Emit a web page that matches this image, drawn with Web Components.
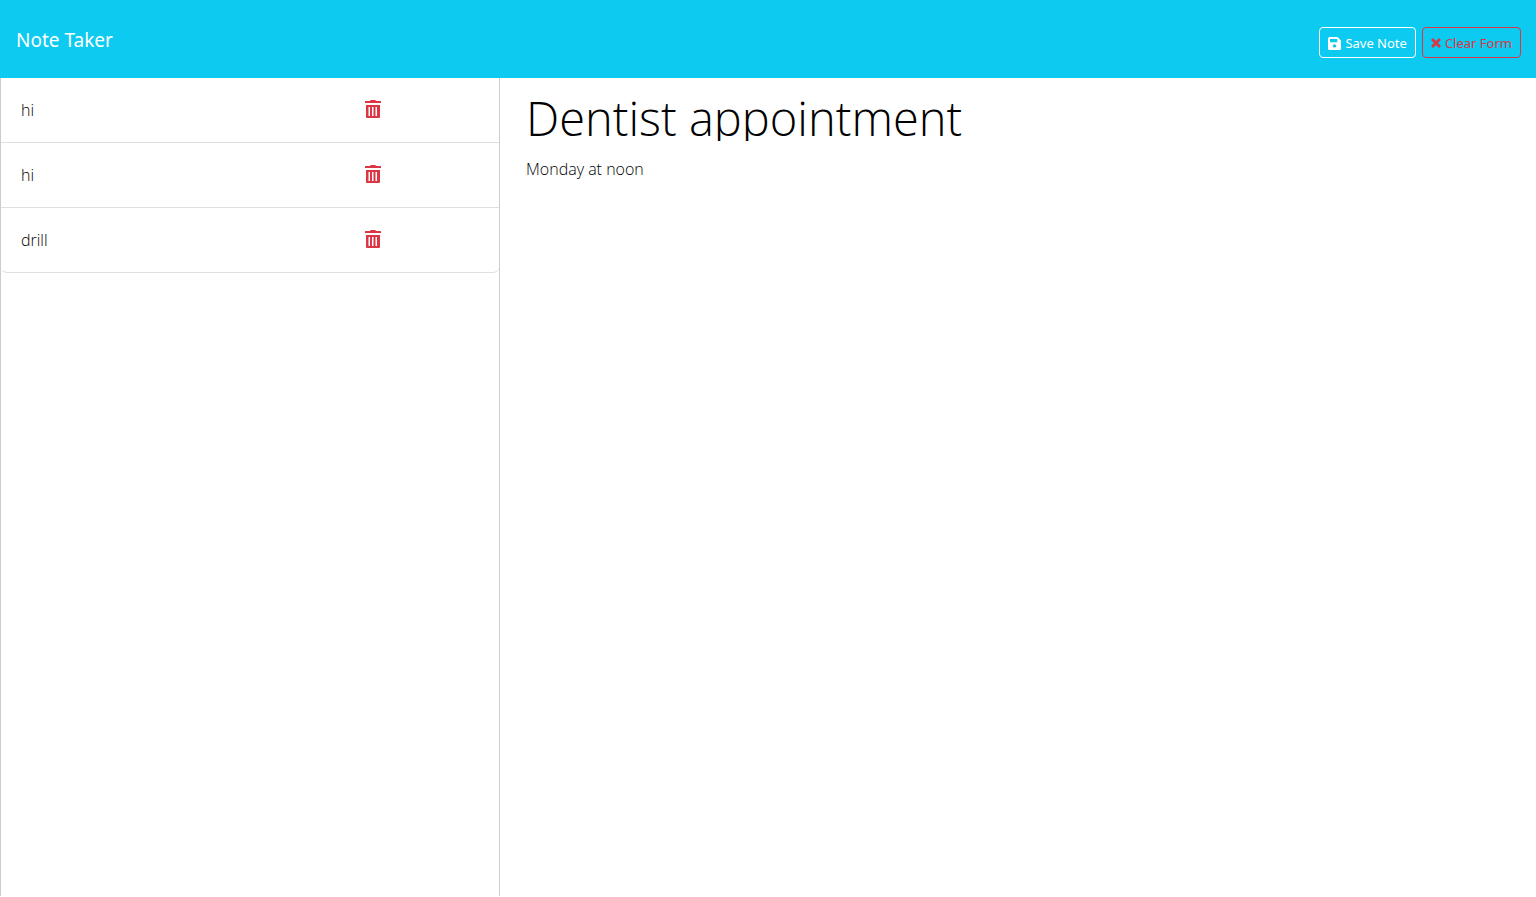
<!DOCTYPE html>
<html lang="en">
<head>
<meta charset="utf-8">
<title>Note Taker</title>
<style>
  html, body { margin: 0; }
  body {
    font-family: "Open Sans", "Noto Sans", sans-serif;
    font-size: 16px;
    line-height: 24px;
    color: #000;
    background: #fff;
  }
</style>
</head>
<body>
<note-app></note-app>

<script>
const define = (name, html) => {
  const template = document.createElement('template');
  template.innerHTML = html;
  customElements.define(name, class extends HTMLElement {
    constructor() {
      super();
      this.attachShadow({ mode: 'open' }).append(template.content.cloneNode(true));
    }
  });
};

define('note-button', `
  <style>
    :host { display: block; color: #fff; }
    :host([variant="danger"]) { color: #dc3545; }
    button {
      display: flex; align-items: center; gap: 4px;
      box-sizing: border-box; height: 31px; padding: 1px 8px 0;
      font: 400 13px/21px "Noto Sans", sans-serif;
      color: inherit; background: transparent; white-space: nowrap;
      border: 1px solid currentColor; border-radius: 4px; cursor: pointer;
    }
    ::slotted(svg) { display: block; flex: none; }
  </style>
  <button type="button"><slot name="icon"></slot><slot></slot></button>`);

define('note-header', `
  <style>
    :host {
      display: flex; justify-content: space-between; align-items: center;
      box-sizing: border-box; height: 78px; padding: 0 15px 0 16px;
      background: #0dcaf0;
    }
    a { padding-top: 2px; color: #fff; font: 400 19px/30px "Noto Sans", sans-serif; text-decoration: none; }
    nav { display: flex; gap: 6px; padding-top: 7px; }
  </style>
  <a href="#">Note Taker</a>
  <nav>
    <note-button>
      <svg slot="icon" width="13" height="13" viewBox="0 0 13 13" fill="currentColor" aria-hidden="true">
        <path fill-rule="evenodd" d="M1.5 0H9.500L13 3.500V11.500A1.500 1.500 0 0 1 11.500 13H1.500A1.500 1.500 0 0 1 0 11.500V1.500A1.500 1.500 0 0 1 1.500 0ZM2 2V5.300H9.300V2ZM6.500 7.200A1.700 1.700 0 1 0 6.500 10.600A1.700 1.700 0 1 0 6.500 7.200Z"/>
      </svg>Save Note</note-button>
    <note-button variant="danger">
      <svg slot="icon" width="10" height="10" viewBox="0 0 10 10" fill="none" stroke="currentColor" stroke-width="2.800" aria-hidden="true">
        <path d="M1 1L9 9M9 1L1 9"/>
      </svg>Clear Form</note-button>
  </nav>`);

define('note-item', `
  <style>
    :host {
      display: flex; align-items: center; box-sizing: border-box;
      height: 65px; padding: 0 20px; border-bottom: 1px solid #dfdfdf;
      font-weight: 350;
    }
    :host(:last-of-type) { border-radius: 0 0 6px 6px; }
    span { flex: 3; }
    div { flex: 1; }
    button { display: block; border: 0; padding: 0 0 2px; background: none; color: #dc3545; cursor: pointer; }
    svg { display: block; }
  </style>
  <span><slot></slot></span>
  <div><button type="button" aria-label="Delete note">
    <svg width="16" height="18" viewBox="0 0 16 18" fill="currentColor" aria-hidden="true">
      <path d="M5 1Q5.300 0 6 0H10Q10.700 0 11 1H15.500Q16 1 16 1.500V3H0V1.500Q0 1 .5 1Z"/>
      <path fill-rule="evenodd" d="M1 5H15V17Q15 18 14 18H2Q1 18 1 17ZM3.500 7V16H5V7ZM7 7V16H8.500V7ZM10.500 7V16H12V7Z"/>
    </svg>
  </button></div>`);

define('note-list', `
  <style>
    :host {
      display: block; box-sizing: border-box;
      border: solid #ccc; border-width: 0 1px;
    }
  </style>
  <slot></slot>`);

define('note-editor', `
  <style>
    :host { display: flex; flex-direction: column; }
    input, textarea {
      display: block; box-sizing: border-box; width: 100%; margin: 0; padding: 0;
      border: 0; outline: 0; background: transparent; color: #000;
      font-family: inherit; font-weight: 350; resize: none;
    }
    input { height: 47px; font-size: 47px; line-height: 47px; }
    textarea { flex: 1; margin-top: 16px; font-size: 16px; line-height: 24px; }
  </style>
  <input type="text" value="Dentist appointment" aria-label="Note title">
  <textarea aria-label="Note text">Monday at noon</textarea>`);

define('note-app', `
  <style>
    :host { display: flex; flex-direction: column; min-height: calc(100vh - 1px); }
    main { flex: 1; display: grid; grid-template-columns: 1fr 2fr; }
    note-list { margin-right: 12px; }
    note-editor { padding: 16px 12px 0 14px; }
  </style>
  <note-header></note-header>
  <main>
    <note-list>
      <note-item>hi</note-item>
      <note-item>hi</note-item>
      <note-item>drill</note-item>
    </note-list>
    <note-editor></note-editor>
  </main>`);
</script>
</body>
</html>
